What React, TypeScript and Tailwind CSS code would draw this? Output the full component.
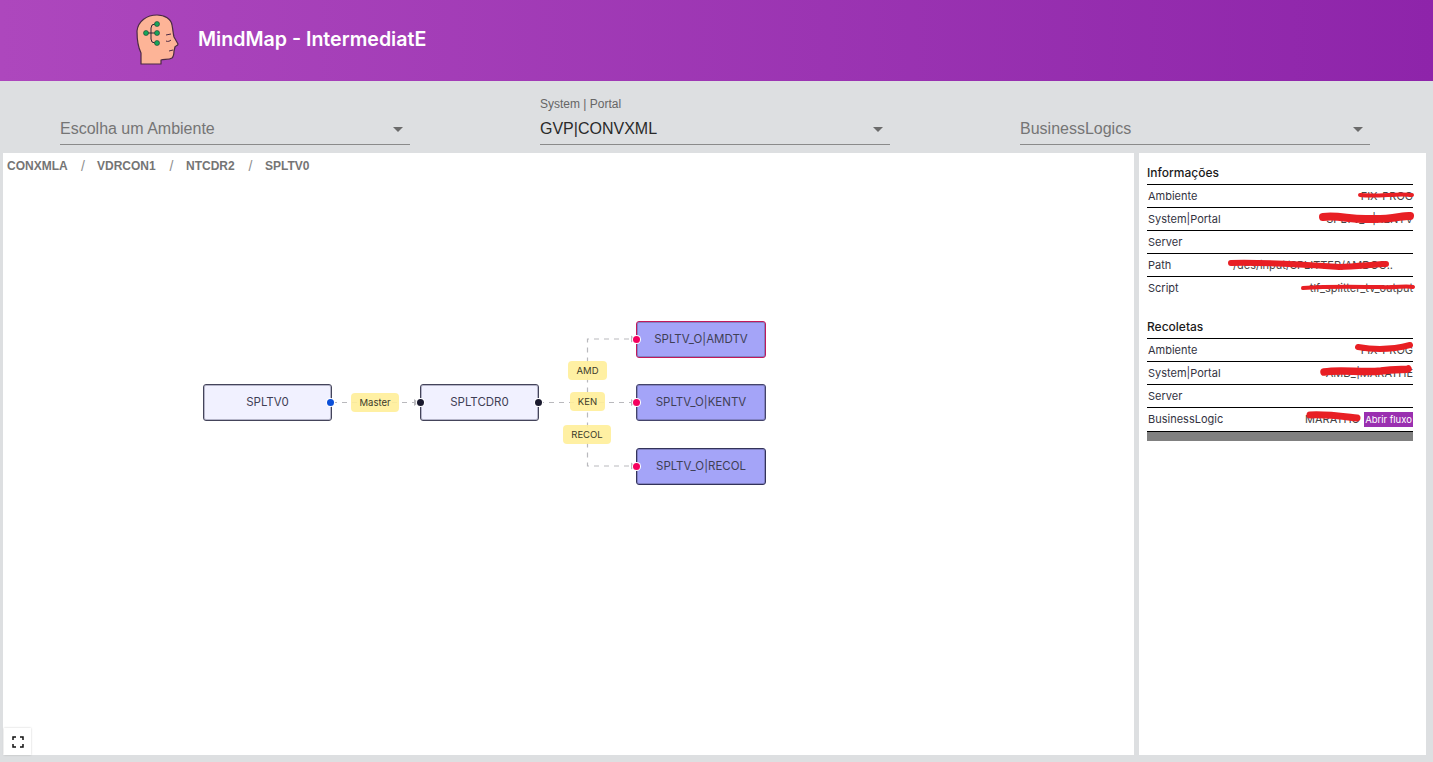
const inter = "font-['Inter',sans-serif]";

const Logo = () => (
  <svg width="44" height="52" viewBox="0 0 44 52" className="shrink-0">
    <path
      d="M5 50 L5 39 C2 33 1 25 1 17 C2 7 11 1 21 1 C29 1 35 5 36 11 C37 16 37 19 38 23 L42 30 C42 32 39 32 39 33 L38 37 C38 39 38 42 36 44 C33 46 28 45 25 46 L25 50 Z"
      fill="#fdb497"
      stroke="#4a2a44"
      strokeWidth="1.2"
      strokeLinejoin="round"
    />
    <path d="M10 19 H21 M15 19 V14 Q15 10 19 10 H21 M15 19 V25 Q15 29 19 29 H21" fill="none" stroke="#2b2436" strokeWidth="1" />
    <circle cx="10" cy="19" r="2.5" fill="#17a65a" stroke="#1f3a30" strokeWidth="0.6" />
    <circle cx="21" cy="10" r="2.5" fill="#17a65a" stroke="#1f3a30" strokeWidth="0.6" />
    <circle cx="21" cy="19" r="2.5" fill="#17a65a" stroke="#1f3a30" strokeWidth="0.6" />
    <circle cx="21" cy="29" r="2.5" fill="#17a65a" stroke="#1f3a30" strokeWidth="0.6" />
    <path d="M30 21 L35 20 M30 27 C32 28 34 27 35 26 M33 37 L37 36" stroke="#4a2a44" strokeWidth="1" fill="none" />
  </svg>
);

const Select = ({ label, value, muted }: { label?: string; value: string; muted?: boolean }) => (
  <div className="w-[350px] h-[49px] relative flex items-end border-b border-[#8a8a8a] font-['Liberation_Sans',sans-serif]">
    {label && <span className="absolute left-0 top-px text-[12px] leading-[14px] text-[#666666]">{label}</span>}
    <span className={`text-[16px] leading-[31px] ${muted ? "text-[#757575]" : "text-[#2a2a2a]"}`}>{value}</span>
    <svg width="24" height="24" viewBox="0 0 24 24" className="absolute right-0 bottom-[3px]">
      <path d="M7 10l5 5 5-5z" fill="#6b6b6b" />
    </svg>
  </div>
);

const Crumbs = () => (
  <div className="flex items-center pl-[4px] pt-[5px] font-['Liberation_Sans',sans-serif] text-[12px] leading-[16px] font-bold text-[#757575]">
    <span className="w-[62px]">CONXMLA</span>
    <span className="w-[28px] text-center text-[14px] font-normal text-[#8f8f8f]">/</span>
    <span className="w-[60px]">VDRCON1</span>
    <span className="w-[29px] text-center text-[14px] font-normal text-[#8f8f8f]">/</span>
    <span className="w-[50px]">NTCDR2</span>
    <span className="w-[29px] text-center text-[14px] font-normal text-[#8f8f8f]">/</span>
    <span>SPLTV0</span>
  </div>
);

const Edges = () => (
  <svg width="1131" height="602" className="absolute left-0 top-0">
    <g fill="none" stroke="#b9b9bd" strokeWidth="1.2" strokeDasharray="5 5">
      <path d="M329 249.5 H416" />
      <path d="M536 249.5 H628" />
      <path d="M584.5 249.5 V186 H628" />
      <path d="M584.5 249.5 V313 H628" />
    </g>
    <g fill="#b9b9bd">
      <path d="M411 246 L416 249.5 L411 253 Z" />
      <path d="M628 182.5 L633 186 L628 189.5 Z" />
      <path d="M628 246 L633 249.5 L628 253 Z" />
      <path d="M628 309.5 L633 313 L628 316.5 Z" />
    </g>
  </svg>
);

const Tag = ({ text, className }: { text: string; className: string }) => (
  <div className={`absolute h-[19px] rounded-[4px] bg-[#ffee99]/90 ${inter} text-[9.5px] leading-[19px] text-center text-[#3b3b2a] ${className}`}>
    {text}
  </div>
);

const Node = ({ text, className }: { text: string; className: string }) => (
  <div className={`absolute h-[37px] rounded-[3px] border shadow-[inset_0_0_0_1px_rgba(70,70,100,0.35)] ${inter} text-[11.5px] leading-[35px] text-center text-[#3f3f55] ${className}`}>
    {text}
  </div>
);

const Dot = ({ className }: { className: string }) => (
  <div className={`absolute w-[7px] h-[7px] rounded-full ring-1 ring-white ${className}`} />
);

const Row = ({ label, value, children, className }: { label: string; value?: string; children?: React.ReactNode; className?: string }) => (
  <div className={`relative border-t border-black flex items-center justify-between text-[11px] text-[#33333f] ${className ?? "h-[23px]"}`}>
    <span className="pl-px">{label}</span>
    {value && <span className="text-[#444444]">{value}</span>}
    {children}
  </div>
);

const Scribble = ({ d, width, className }: { d: string; width: number; className: string }) => (
  <svg width="120" height="12" viewBox="0 0 120 12" className={`absolute overflow-visible ${className}`}>
    <path d={d} fill="none" stroke="#e81f24" strokeWidth={width} strokeLinecap="round" />
  </svg>
);

export default function App() {
  return (
    <div className="h-[762px] w-[1433px] overflow-hidden bg-[#dddfe1] flex flex-col">
      <header className="h-[81px] shrink-0 flex items-center pl-[136px] pb-[2px] bg-gradient-to-r from-[#ad47bd] to-[#8e24aa]">
        <Logo />
        <h1 className={`ml-[18px] pt-px ${inter} text-[19.6px] font-semibold text-white`}>MindMap - IntermediatE</h1>
      </header>

      <div className="h-[72px] shrink-0 flex gap-[130px] pl-[60px] pt-[15px]">
        <Select value="Escolha um Ambiente" muted />
        <Select label="System | Portal" value="GVP|CONVXML" />
        <Select value="BusinessLogics" muted />
      </div>

      <main className="h-[602px] shrink-0 flex gap-[5px] pl-[3px]">
        <section className="relative w-[1131px] bg-white">
          <Crumbs />
          <Edges />
          <Node text="SPLTV0" className="left-[200px] top-[231px] w-[129px] bg-[#f1f1ff] border-[#44445a]" />
          <Node text="SPLTCDR0" className="left-[417px] top-[231px] w-[119px] bg-[#f1f1ff] border-[#44445a]" />
          <Node text="SPLTV_O|AMDTV" className="left-[633px] top-[168px] w-[130px] bg-[#a4a4f8] border-[#c2185b]" />
          <Node text="SPLTV_O|KENTV" className="left-[633px] top-[231px] w-[130px] bg-[#a4a4f8] border-[#44446a]" />
          <Node text="SPLTV_O|RECOL" className="left-[633px] top-[295px] w-[130px] bg-[#a4a4f8] border-[#33335a]" />
          <Tag text="Master" className="left-[348px] top-[240px] w-[48px]" />
          <Tag text="AMD" className="left-[565px] top-[208px] w-[39px]" />
          <Tag text="KEN" className="left-[567px] top-[239px] w-[35px]" />
          <Tag text="RECOL" className="left-[560px] top-[272px] w-[48px]" />
          <Dot className="left-[324px] top-[246px] bg-[#0b4fd8]" />
          <Dot className="left-[414px] top-[246px] bg-[#1a1a2e]" />
          <Dot className="left-[532px] top-[246px] bg-[#1a1a2e]" />
          <Dot className="left-[630px] top-[183px] bg-[#f5005f]" />
          <Dot className="left-[630px] top-[246px] bg-[#f5005f]" />
          <Dot className="left-[630px] top-[310px] bg-[#f5005f]" />
          <button className="absolute left-[1px] bottom-0 w-[27px] h-[27px] bg-white shadow-[0_0_2px_rgba(0,0,0,0.2)] flex items-center justify-center">
            <svg width="12" height="12" viewBox="0 0 12 12" fill="none" stroke="#111111" strokeWidth="1.5">
              <path d="M1 4 V1 H4 M8 1 H11 V4 M11 8 V11 H8 M4 11 H1 V8" />
            </svg>
          </button>
        </section>

        <aside className={`w-[287px] bg-white pt-[12px] px-[8px] ${inter}`}>
          <div className="pr-[5px]">
            <h2 className="h-[19px] text-[12px] leading-[16px] font-medium text-[#1a1a1a]">Informações</h2>
            <Row label="Ambiente" value="FIX-PROG">
              <Scribble d="M2 5 C20 7 40 3 54 5" width={4} className="left-[211px] top-[5px]" />
            </Row>
            <Row label="System|Portal" value="SPLTV_O|KENTV">
              <Scribble d="M3 5 C20 3 30 8 50 7 C70 8 85 3 90 4" width={8} className="left-[173px] top-[4px]" />
            </Row>
            <Row label="Server" />
            <Row label="Path">
              <span className="mr-[20px] text-[#444444]">/des/input/SPLITTER/AMDOC..</span>
              <Scribble d="M2 4 C40 3 80 6 110 8 C130 7 150 5 157 5" width={6} className="left-[82px] top-[5px]" />
            </Row>
            <Row label="Script" value="tlf_splitter_tv_output">
              <Scribble d="M2 6 C30 4 60 5 80 5 C95 6 105 3 112 5" width={4} className="left-[154px] top-[5px]" />
            </Row>

            <h2 className="mt-[20px] h-[19px] text-[12px] leading-[16px] font-medium text-[#1a1a1a]">Recoletas</h2>
            <Row label="Ambiente" value="FIX-PROG">
              <Scribble d="M3 5 C20 8 40 7 55 3" width={6} className="left-[208px] top-[3px]" />
            </Row>
            <Row label="System|Portal" value="AMD_|MARATHE">
              <Scribble d="M3 7 C20 4 40 8 60 6 C75 4 85 5 87 4" width={7.5} className="left-[174px] top-[3px]" />
            </Row>
            <Row label="Server" />
            <Row label="BusinessLogic" className="h-[24px]">
              <span className="ml-auto mr-[4px] text-[#444444]">MARATHO</span>
              <span className="h-[15px] w-[49px] bg-[#9a2fb0] text-white text-[9.5px] leading-[15px] text-center">Abrir fluxo</span>
              <Scribble d="M3 3 C20 2 40 5 50 6" width={7} className="left-[160px] top-[4px]" />
            </Row>
            <div className="h-[10px] bg-[#808080] border-t border-black" />
          </div>
        </aside>
      </main>
    </div>
  );
}
